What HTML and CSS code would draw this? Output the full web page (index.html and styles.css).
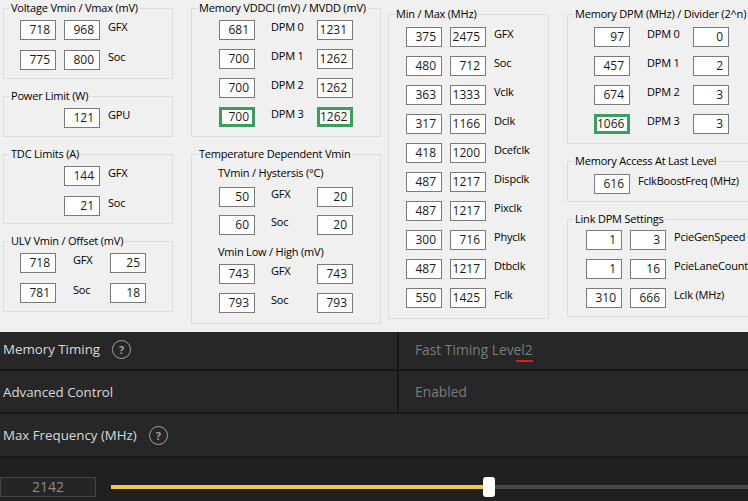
FILE: index.html
```html
<!DOCTYPE html>
<html lang="en">
  <head>
    <meta charset="UTF-8" />
    <title>Overdrive Limits</title>
    <link rel="stylesheet" href="styles.css">
  </head>

  <body>
    <div class="panel">
      <!-- column 1 -->
      <div class="col col-1">
        <fieldset class="grp h-volt">
          <legend>Voltage Vmin / Vmax (mV)</legend>
          <div class="rows pl-16">
            <div class="row"><span class="box">718</span><span class="box">968</span><span class="lbl">GFX</span></div>
            <div class="row"><span class="box">775</span><span class="box">800</span><span class="lbl">Soc</span></div>
          </div>
        </fieldset>
        <fieldset class="grp h-power">
          <legend>Power Limit (W)</legend>
          <div class="rows pl-16">
            <div class="row"><span class="box blank"></span><span class="box">121</span><span class="lbl">GPU</span></div>
          </div>
        </fieldset>
        <fieldset class="grp h-tdc">
          <legend>TDC Limits (A)</legend>
          <div class="rows pl-16">
            <div class="row"><span class="box blank"></span><span class="box">144</span><span class="lbl">GFX</span></div>
            <div class="row"><span class="box blank"></span><span class="box">21</span><span class="lbl">Soc</span></div>
          </div>
        </fieldset>
        <fieldset class="grp h-ulv">
          <legend>ULV Vmin / Offset (mV)</legend>
          <div class="rows pl-16">
            <div class="row"><span class="box">718</span><span class="lbl mid mid-54">GFX</span><span class="box">25</span></div>
            <div class="row"><span class="box">781</span><span class="lbl mid mid-54">Soc</span><span class="box">18</span></div>
          </div>
        </fieldset>
      </div>

      <!-- column 2 -->
      <div class="col col-2">
        <fieldset class="grp h-vddci">
          <legend>Memory VDDCI (mV) / MVDD (mV)</legend>
          <div class="rows tight pl-27">
            <div class="row"><span class="box">681</span><span class="lbl mid">DPM 0</span><span class="box">1231</span></div>
            <div class="row"><span class="box">700</span><span class="lbl mid">DPM 1</span><span class="box">1262</span></div>
            <div class="row"><span class="box">700</span><span class="lbl mid">DPM 2</span><span class="box">1262</span></div>
            <div class="row"><span class="box hi">700</span><span class="lbl mid">DPM 3</span><span class="box hi">1262</span></div>
          </div>
        </fieldset>
        <fieldset class="grp h-temp">
          <legend>Temperature Dependent Vmin</legend>
          <div class="rows sub pl-27">
            <div class="sub-title">TVmin / Hystersis (&deg;C)</div>
            <div class="row"><span class="box">50</span><span class="lbl mid">GFX</span><span class="box">20</span></div>
            <div class="row"><span class="box">60</span><span class="lbl mid">Soc</span><span class="box">20</span></div>
            <div class="sub-title">Vmin Low / High (mV)</div>
            <div class="row"><span class="box">743</span><span class="lbl mid">GFX</span><span class="box">743</span></div>
            <div class="row"><span class="box">793</span><span class="lbl mid">Soc</span><span class="box">793</span></div>
          </div>
        </fieldset>
      </div>

      <!-- column 3 -->
      <div class="col col-3">
        <fieldset class="grp h-minmax">
          <legend>Min / Max (MHz)</legend>
          <div class="rows tight pl-17 pt-6">
            <div class="row"><span class="box">375</span><span class="box">2475</span><span class="lbl">GFX</span></div>
            <div class="row"><span class="box">480</span><span class="box">712</span><span class="lbl">Soc</span></div>
            <div class="row"><span class="box">363</span><span class="box">1333</span><span class="lbl">Vclk</span></div>
            <div class="row"><span class="box">317</span><span class="box">1166</span><span class="lbl">Dclk</span></div>
            <div class="row"><span class="box">418</span><span class="box">1200</span><span class="lbl">Dcefclk</span></div>
            <div class="row"><span class="box">487</span><span class="box">1217</span><span class="lbl">Dispclk</span></div>
            <div class="row"><span class="box">487</span><span class="box">1217</span><span class="lbl">Pixclk</span></div>
            <div class="row"><span class="box">300</span><span class="box">716</span><span class="lbl">Phyclk</span></div>
            <div class="row"><span class="box">487</span><span class="box">1217</span><span class="lbl">Dtbclk</span></div>
            <div class="row"><span class="box">550</span><span class="box">1425</span><span class="lbl">Fclk</span></div>
          </div>
        </fieldset>
      </div>

      <!-- column 4 -->
      <div class="col col-4">
        <fieldset class="grp h-memdpm">
          <legend>Memory DPM (MHz) / Divider (2^n)</legend>
          <div class="rows tight pl-26 pt-6">
            <div class="row"><span class="box">97</span><span class="lbl mid mid-63">DPM 0</span><span class="box">0</span></div>
            <div class="row"><span class="box">457</span><span class="lbl mid mid-63">DPM 1</span><span class="box">2</span></div>
            <div class="row"><span class="box">674</span><span class="lbl mid mid-63">DPM 2</span><span class="box">3</span></div>
            <div class="row"><span class="box hi">1066</span><span class="lbl mid mid-63">DPM 3</span><span class="box">3</span></div>
          </div>
        </fieldset>
        <fieldset class="grp h-access">
          <legend>Memory Access At Last Level</legend>
          <div class="rows pl-26 pt-6">
            <div class="row"><span class="box">616</span><span class="lbl">FclkBoostFreq (MHz)</span></div>
          </div>
        </fieldset>
        <fieldset class="grp h-link">
          <legend>Link DPM Settings</legend>
          <div class="rows tight pl-18 pt-4">
            <div class="row"><span class="box">1</span><span class="box">3</span><span class="lbl">PcieGenSpeed</span></div>
            <div class="row"><span class="box">1</span><span class="box">16</span><span class="lbl">PcieLaneCount</span></div>
            <div class="row"><span class="box">310</span><span class="box">666</span><span class="lbl">Lclk (MHz)</span></div>
          </div>
        </fieldset>
      </div>
    </div>

    <!-- dark settings list -->
    <div class="settings">
      <div class="item item-timing">
        <div class="name">Memory Timing <span class="help">?</span></div>
        <div class="value"><span class="val-text">Fast Timing Level2</span></div>
      </div>
      <div class="item item-adv">
        <div class="name">Advanced Control</div>
        <div class="value">Enabled</div>
      </div>
      <div class="item item-max">
        <div class="name">Max Frequency (MHz) <span class="help">?</span></div>
        <div></div>
      </div>
      <div class="slider-row">
        <div class="num">2142</div>
        <div class="track">
          <div class="fill" style="width: 58.4%"></div>
          <div class="thumb" style="left: 58.4%"></div>
        </div>
      </div>
    </div>
  </body>
</html>
```

FILE: styles.css
```css
* {
  margin: 0;
  padding: 0;
  box-sizing: border-box;
}

body {
  width: 748px;
  height: 501px;
  overflow: hidden;
  font-family: "Open Sans", "Liberation Sans", sans-serif;
  background-color: #f0f0f0;
}

/* top dialog panel */
.panel {
  display: flex;
  height: 332px;
  padding-left: 3px;
  background-color: #f0f0f0;
  color: #000;
  font-size: 11px;
  letter-spacing: -0.2px;
  overflow: hidden;
}

.col {
  display: flex;
  flex-direction: column;
  gap: 10px;
  flex-shrink: 0;
}

.col-1 { width: 170px; padding-top: 1px; }
.col-2 { width: 190px; margin-left: 18px; padding-top: 1px; }
.col-3 { width: 161px; margin-left: 7px; padding-top: 7px; }
.col-4 { width: 200px; margin-left: 18px; padding-top: 7px; }

.grp {
  border: 1px solid #dcdcdc;
  min-width: 0;
}

.grp legend {
  margin-left: 5px;
  padding: 0 2px;
  line-height: 14px;
  white-space: nowrap;
  color: #000;
}

.h-volt { height: 78px; }
.h-power { height: 48px; }
.h-tdc { height: 77px; }
.h-ulv { height: 78px; }
.h-vddci { height: 136px; }
.h-temp { height: 177px; }
.h-minmax { height: 312px; }
.h-memdpm { height: 137px; }
.h-access { height: 48px; }
.h-link { height: 105px; }

.rows {
  padding-top: 5px;
}

.pl-16 { padding-left: 16px; }
.pl-17 { padding-left: 17px; }
.pl-18 { padding-left: 18px; }
.pl-26 { padding-left: 26px; }
.pl-27 { padding-left: 27px; }
.pt-4 { padding-top: 4px; }
.pt-6 { padding-top: 6px; }

.row {
  display: flex;
  height: 20px;
  gap: 8px;
}

.rows .row + .row {
  margin-top: 10px;
}

.rows.tight .row + .row {
  margin-top: 9px;
}

.box {
  width: 36px;
  height: 20px;
  flex-shrink: 0;
  border: 1px solid #7a7a7a;
  background-color: #fff;
  text-align: right;
  padding-right: 5px;
  font-size: 12px;
  letter-spacing: 0;
  line-height: 18px;
  color: #1a1a1a;
}

.box.blank {
  visibility: hidden;
}

.box.hi {
  border: 3px solid #38a05a;
  line-height: 14px;
  padding-right: 3px;
}

.lbl {
  line-height: 14px;
  white-space: nowrap;
}

.lbl.mid {
  width: 62px;
  padding-left: 16px;
  margin: 0 -8px;
}

.lbl.mid-54 { width: 54px; padding-left: 17px; }
.lbl.mid-63 { width: 63px; padding-left: 17px; }

.sub-title {
  line-height: 16px;
  margin-left: -1px;
}

.rows.sub {
  padding-top: 4px;
}

.rows.sub .sub-title + .row {
  margin-top: 6px;
}

.rows.sub .row + .row {
  margin-top: 8px;
}

.rows.sub .row + .sub-title {
  margin-top: 9px;
}

.rows.sub .sub-title ~ .sub-title + .row {
  margin-top: 4px;
}

.rows.sub .sub-title ~ .sub-title ~ .row + .row {
  margin-top: 9px;
}

/* dark settings list */
.settings {
  background-color: #181818;
  font-size: 13.3px;
}

.item {
  display: grid;
  grid-template-columns: 397px 1fr;
  background-color: #272727;
  margin-bottom: 2px;
}

.item-timing { height: 37px; }
.item-adv { height: 41px; }
.item-max { height: 42px; }

.item-timing .name,
.item-timing .value {
  padding-bottom: 3px;
}

.name {
  display: flex;
  align-items: center;
  gap: 12px;
  padding-left: 3px;
  color: #d9d9d9;
}

.value {
  display: flex;
  align-items: center;
  border-left: 2px solid #161616;
  padding-left: 16px;
  color: #7b7b7b;
  font-size: 13.8px;
}

.val-text {
  position: relative;
}

/* spell check mark under the last letters */
.val-text::after {
  content: "";
  position: absolute;
  right: 0;
  bottom: -3px;
  width: 17px;
  height: 2px;
  background-color: #c8262a;
}

.help {
  display: flex;
  align-items: center;
  justify-content: center;
  width: 19px;
  height: 19px;
  border: 1.6px solid #a0a0a0;
  border-radius: 50%;
  color: #a0a0a0;
  font-size: 11px;
  font-weight: bold;
  line-height: 1;
}

.slider-row {
  display: flex;
  align-items: flex-start;
  height: 43px;
  padding-top: 19px;
  background-color: #202020;
}

.num {
  width: 96px;
  height: 20px;
  flex-shrink: 0;
  border: 1px solid #464646;
  background-color: #252525;
  color: #8a8a8a;
  text-align: center;
  font-size: 14px;
  line-height: 18px;
}

.track {
  position: relative;
  flex: 1;
  height: 4px;
  margin: 8px 0 0 15px;
  background-color: #4a4a4a;
}

.fill {
  height: 100%;
  background-color: #f3c644;
}

.thumb {
  position: absolute;
  top: -8px;
  width: 12px;
  height: 20px;
  background-color: #fff;
  border-radius: 3px;
}
```
